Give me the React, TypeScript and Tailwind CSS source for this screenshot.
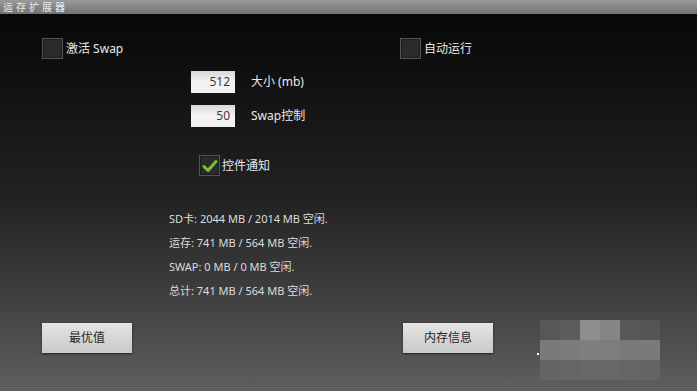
import React from 'react';

const FONT = { fontFamily: '"Noto Sans", "Noto Sans CJK SC", sans-serif' };

function Box({ checked = false }: { checked?: boolean }) {
  return (
    <div className="flex h-[21px] w-[21px] shrink-0 items-center justify-center border border-[#555] bg-[#2b2b2b] shadow-[inset_0_0_2px_#000]">
      {checked && (
        <svg width="16" height="14" viewBox="0 0 16 14">
          <path d="M2 7.5 L6 11.5 L14 2.5" fill="none" stroke="#7fc02a" strokeWidth="3" strokeLinecap="round" strokeLinejoin="round" />
        </svg>
      )}
    </div>
  );
}

function NumField({ value }: { value: string }) {
  return (
    <div className="flex h-[22px] w-[44px] items-center justify-end bg-linear-to-b from-[#d8d8d8] via-[#f4f4f4] to-[#f0f0f0] pr-[5px] text-[12px] text-[#3a3a3a]">
      {value}
    </div>
  );
}

function Btn({ label }: { label: string }) {
  return (
    <div className="flex h-[30px] w-[90px] items-center justify-center bg-linear-to-b from-[#e4e4e4] to-[#c9c9c9] text-[12px] text-[#262626] shadow-[0_1px_2px_#222]">
      {label}
    </div>
  );
}

const INFO = [
  'SD卡: 2044 MB / 2014 MB 空闲.',
  '运存: 741 MB / 564 MB 空闲.',
  'SWAP: 0 MB / 0 MB 空闲.',
  '总计: 741 MB / 564 MB 空闲.',
];

// mosaic watermark bottom-right
const MOSAIC: string[][] = [
  ['#575757', '#5c5c5c', '#8e8e8e', '#858585', '#585858', '#555555'],
  ['#7a7a7a', '#7c7c7c', '#7e7e7e', '#7d7d7d', '#797979', '#7a7a7a'],
  ['#646464', '#666666', '#686868', '#686868', '#656565', '#646464'],
];

export default function App() {
  return (
    <div className="flex h-[391px] w-[697px] flex-col overflow-hidden" style={FONT}>
      <div className="flex h-[14px] items-center bg-linear-to-b from-[#9a9a9a] to-[#727272] pl-[3px] text-[10px] leading-none tracking-[3px] text-[#ececec]">
        运存扩展器
      </div>
      <div className="relative flex-1 bg-linear-to-b from-[#080808] via-[#232323] to-[#5f5f5f] pt-[24px] text-[#e8e8e8]">
        <div className="flex pl-[42px]">
          <div className="flex w-[358px] items-center gap-[3px] text-[12px]">
            <Box />
            <span>激活 Swap</span>
          </div>
          <div className="flex items-center gap-[3px] text-[12px]">
            <Box />
            <span>自动运行</span>
          </div>
        </div>

        <div className="mt-[12px] flex items-center pl-[191px]">
          <NumField value="512" />
          <span className="ml-[16px] text-[12px]">大小 (mb)</span>
        </div>
        <div className="mt-[12px] flex items-center pl-[191px]">
          <NumField value="50" />
          <span className="ml-[16px] text-[12px]">Swap控制</span>
        </div>

        <div className="mt-[28px] flex items-center gap-[2px] pl-[199px] text-[12px]">
          <Box checked />
          <span>控件通知</span>
        </div>

        <div className="mt-[31px] flex flex-col pl-[169px] text-[11px] leading-[24px] text-[#dcdcdc]">
          {INFO.map((line) => (
            <div key={line}>{line}</div>
          ))}
        </div>

        <div className="mt-[20px] flex pl-[42px]">
          <div className="w-[361px]">
            <Btn label="最优值" />
          </div>
          <Btn label="内存信息" />
        </div>

        <div className="absolute left-[540px] top-[306px] grid grid-cols-6">
          {MOSAIC.flat().map((c, i) => (
            <div key={i} className="h-[20px] w-[20px]" style={{ backgroundColor: c }} />
          ))}
        </div>
        <div className="absolute left-[537px] top-[339px] h-[2px] w-[2px] bg-white" />
      </div>
    </div>
  );
}
